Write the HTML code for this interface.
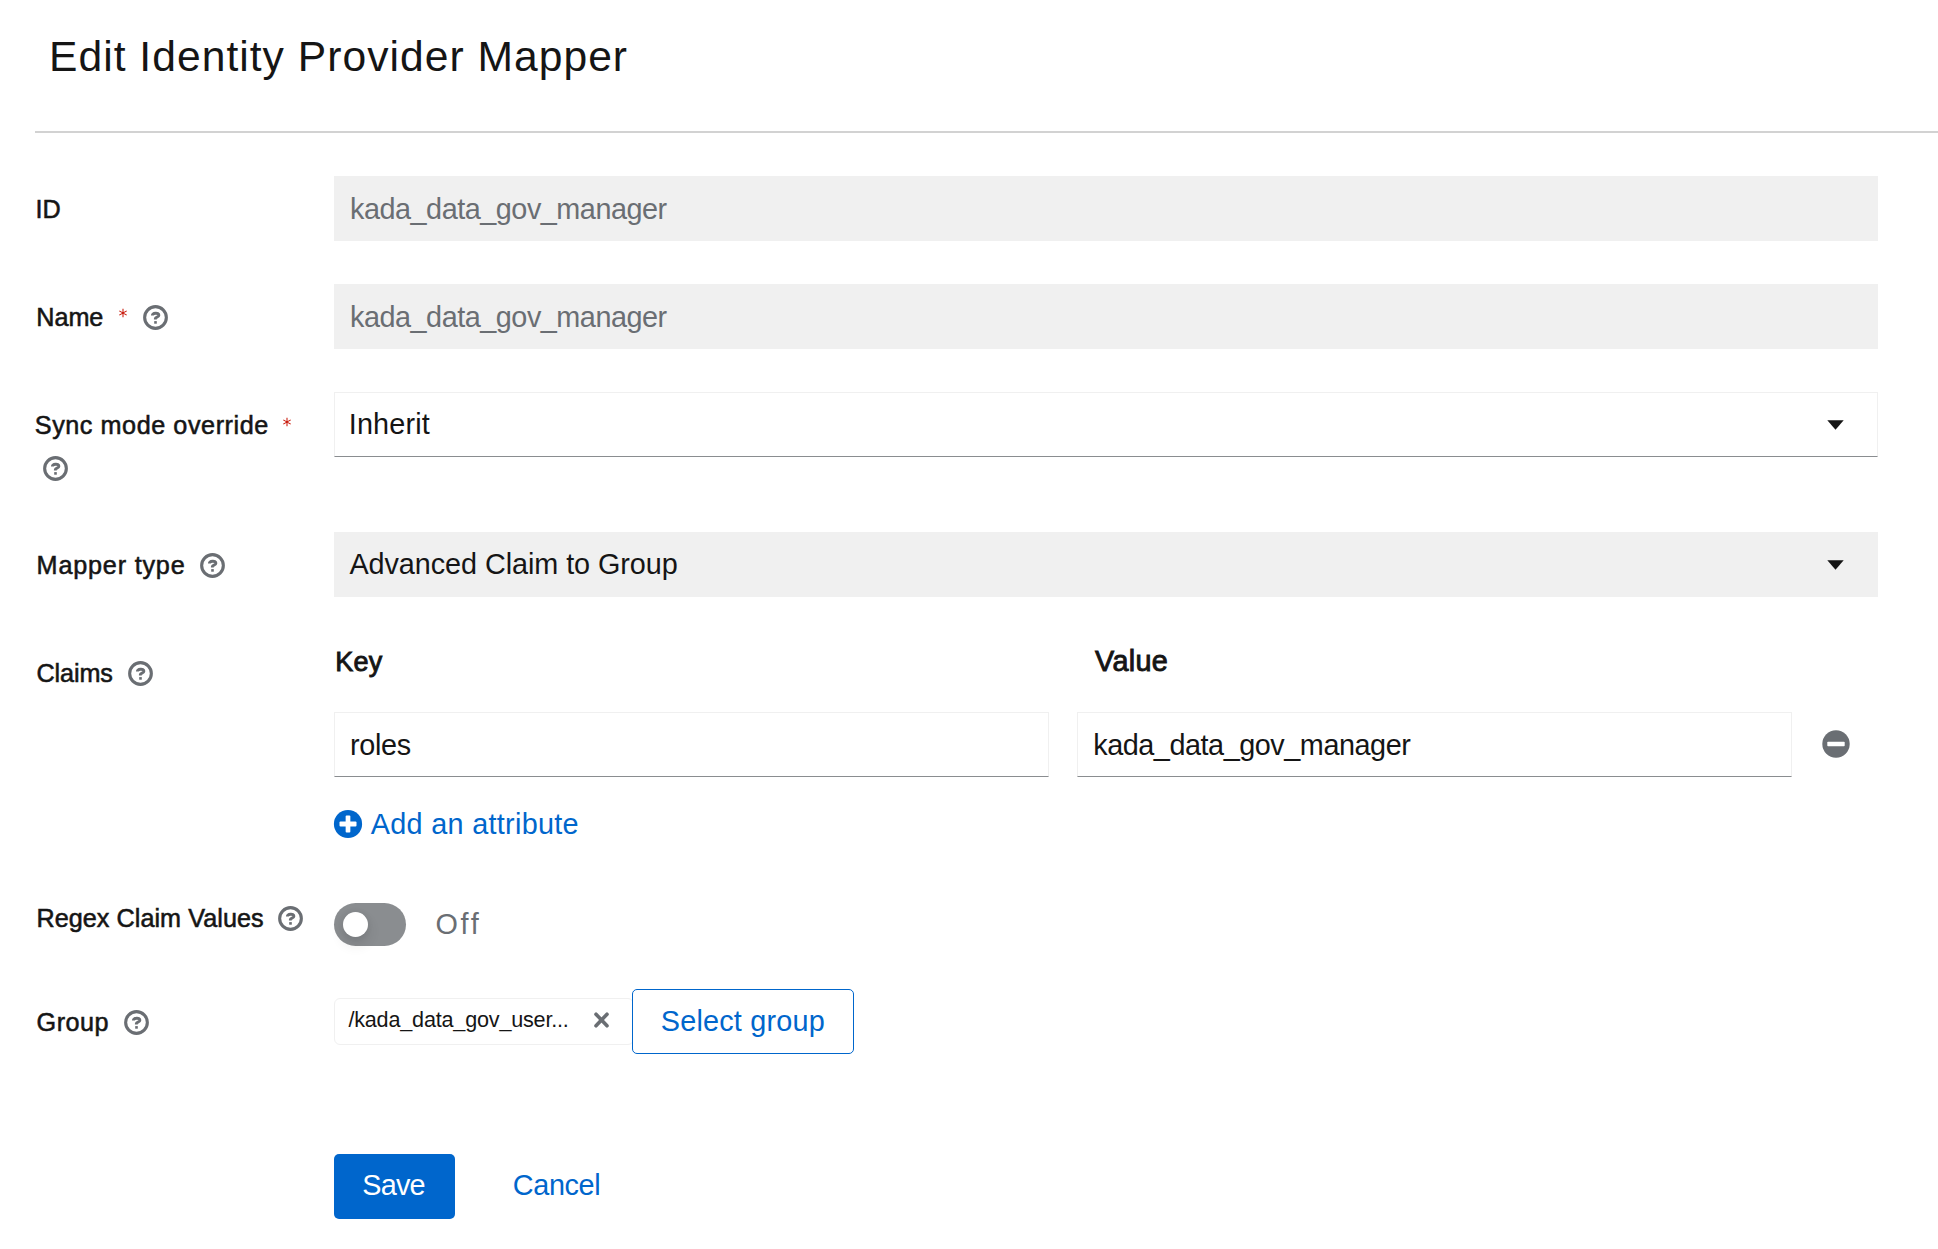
<!DOCTYPE html>
<html>
<head>
<meta charset="utf-8">
<title>Edit Identity Provider Mapper</title>
<style>
html,body{margin:0;padding:0;background:#fff;}
body{width:1938px;height:1249px;position:relative;overflow:hidden;font-family:"Liberation Sans",sans-serif;color:#151515;}
.a{position:absolute;}
.t{position:absolute;white-space:nowrap;line-height:1;}
.lbl{-webkit-text-stroke:0.55px #151515;}
.hdr{-webkit-text-stroke:0.9px #151515;}
.inp{position:absolute;box-sizing:border-box;}
.dis{background:#f0f0f0;}
.brd{background:#fff;border:1px solid #f0f0f0;border-bottom-color:#8a8d90;}
.gray{color:#6a6e73;}
.blue{color:#0066cc;}
.white{color:#fff;}
.ast{position:absolute;white-space:nowrap;line-height:1;font-size:22px;color:#c9190b;}
svg{position:absolute;overflow:visible;}
</style>
</head>
<body>

<div class="a" style="left:35px;top:131px;width:1903px;height:2px;background:#d2d2d2;"></div>
<div class="inp dis" style="left:334px;top:176px;width:1544px;height:65px;"></div>
<svg style="left:118.00px;top:307.90px" width="10" height="10" viewBox="-5 -5 10 10"><path d="M0 -4.3 V4.3 M-3.7 -2.1 L3.7 2.1 M-3.7 2.1 L3.7 -2.1" stroke="#c9190b" stroke-width="1.05" fill="none"/></svg>
<svg style="left:143.0px;top:304.8px" width="25" height="25" viewBox="-12.5 -12.5 25 25"><circle r="10.85" fill="none" stroke="#6a6e73" stroke-width="3.1"/><path d="M-3.1 -1.9 C-3.1 -4.7 3.4 -5.3 3.4 -2.3 C3.4 -0.2 -0.15 -0.7 -0.15 1.0 L-0.15 1.9" fill="none" stroke="#6a6e73" stroke-width="2.9"/><rect x="-1.3" y="3.6" width="2.6" height="2.6" fill="#6a6e73"/></svg>
<div class="inp dis" style="left:334px;top:284px;width:1544px;height:65px;"></div>
<svg style="left:282.40px;top:416.60px" width="10" height="10" viewBox="-5 -5 10 10"><path d="M0 -4.3 V4.3 M-3.7 -2.1 L3.7 2.1 M-3.7 2.1 L3.7 -2.1" stroke="#c9190b" stroke-width="1.05" fill="none"/></svg>
<svg style="left:42.7px;top:455.8px" width="25" height="25" viewBox="-12.5 -12.5 25 25"><circle r="10.85" fill="none" stroke="#6a6e73" stroke-width="3.1"/><path d="M-3.1 -1.9 C-3.1 -4.7 3.4 -5.3 3.4 -2.3 C3.4 -0.2 -0.15 -0.7 -0.15 1.0 L-0.15 1.9" fill="none" stroke="#6a6e73" stroke-width="2.9"/><rect x="-1.3" y="3.6" width="2.6" height="2.6" fill="#6a6e73"/></svg>
<div class="inp brd" style="left:334px;top:392px;width:1544px;height:65px;"></div>
<svg style="left:1827px;top:420px" width="17" height="10" viewBox="0 0 17 10"><path d="M0.3 0.2 L16.7 0.2 L8.5 9.8 Z" fill="#151515"/></svg>
<svg style="left:200.0px;top:553.0px" width="25" height="25" viewBox="-12.5 -12.5 25 25"><circle r="10.85" fill="none" stroke="#6a6e73" stroke-width="3.1"/><path d="M-3.1 -1.9 C-3.1 -4.7 3.4 -5.3 3.4 -2.3 C3.4 -0.2 -0.15 -0.7 -0.15 1.0 L-0.15 1.9" fill="none" stroke="#6a6e73" stroke-width="2.9"/><rect x="-1.3" y="3.6" width="2.6" height="2.6" fill="#6a6e73"/></svg>
<div class="inp dis" style="left:334px;top:532px;width:1544px;height:65px;"></div>
<svg style="left:1827px;top:560px" width="17" height="10" viewBox="0 0 17 10"><path d="M0.3 0.2 L16.7 0.2 L8.5 9.8 Z" fill="#151515"/></svg>
<svg style="left:127.9px;top:661.0px" width="25" height="25" viewBox="-12.5 -12.5 25 25"><circle r="10.85" fill="none" stroke="#6a6e73" stroke-width="3.1"/><path d="M-3.1 -1.9 C-3.1 -4.7 3.4 -5.3 3.4 -2.3 C3.4 -0.2 -0.15 -0.7 -0.15 1.0 L-0.15 1.9" fill="none" stroke="#6a6e73" stroke-width="2.9"/><rect x="-1.3" y="3.6" width="2.6" height="2.6" fill="#6a6e73"/></svg>
<div class="inp brd" style="left:334px;top:712px;width:715px;height:65px;"></div>
<div class="inp brd" style="left:1077px;top:712px;width:715px;height:65px;"></div>
<svg style="left:1821.5px;top:730px" width="28" height="28" viewBox="-14 -14 28 28"><circle r="13.7" fill="#6a6e73"/><rect x="-8.7" y="-2.3" width="17.4" height="4.6" rx="0.8" fill="#fff"/></svg>
<svg style="left:334.1px;top:809.7px" width="28" height="28" viewBox="-14 -14 28 28"><circle r="14.1" fill="#0066cc"/><rect x="-8.5" y="-2.45" width="17" height="4.9" rx="1" fill="#fff"/><rect x="-2.35" y="-8.4" width="4.7" height="16.9" rx="1" fill="#fff"/></svg>
<svg style="left:278.0px;top:905.8px" width="25" height="25" viewBox="-12.5 -12.5 25 25"><circle r="10.85" fill="none" stroke="#6a6e73" stroke-width="3.1"/><path d="M-3.1 -1.9 C-3.1 -4.7 3.4 -5.3 3.4 -2.3 C3.4 -0.2 -0.15 -0.7 -0.15 1.0 L-0.15 1.9" fill="none" stroke="#6a6e73" stroke-width="2.9"/><rect x="-1.3" y="3.6" width="2.6" height="2.6" fill="#6a6e73"/></svg>
<div class="a" style="left:334px;top:903px;width:72px;height:43px;border-radius:22px;background:#8a8d90;"></div>
<div class="a" style="left:343px;top:912px;width:25px;height:25px;border-radius:50%;background:#fff;box-shadow:0 7px 14px rgba(3,3,3,0.12),0 0 7px rgba(3,3,3,0.06);"></div>
<svg style="left:124.0px;top:1009.5px" width="25" height="25" viewBox="-12.5 -12.5 25 25"><circle r="10.85" fill="none" stroke="#6a6e73" stroke-width="3.1"/><path d="M-3.1 -1.9 C-3.1 -4.7 3.4 -5.3 3.4 -2.3 C3.4 -0.2 -0.15 -0.7 -0.15 1.0 L-0.15 1.9" fill="none" stroke="#6a6e73" stroke-width="2.9"/><rect x="-1.3" y="3.6" width="2.6" height="2.6" fill="#6a6e73"/></svg>
<div class="inp" style="left:334px;top:998px;width:300px;height:47px;border:1px solid #f0f0f0;border-radius:6px;"></div>
<svg style="left:594px;top:1012px" width="15" height="16" viewBox="0 0 15 16"><path d="M2 2.2 L13 13.8 M13 2.2 L2 13.8" stroke="#6a6e73" stroke-width="3.6" stroke-linecap="round"/></svg>
<div class="inp" style="left:632px;top:989px;width:222px;height:65px;border:1.8px solid #0066cc;border-radius:5px;background:#fff;"></div>
<div class="inp" style="left:334px;top:1154px;width:121px;height:65px;border-radius:5px;background:#0066cc;"></div>
<div class="t " id="title" style="left:49.00px;top:34.81px;font-size:42.6px;letter-spacing:1.029px;">Edit Identity Provider Mapper</div>
<div class="t lbl" id="l_id" style="left:35.40px;top:197.00px;font-size:25.2px;">ID</div>
<div class="t gray" id="v_id" style="left:350.00px;top:194.80px;font-size:28.8px;letter-spacing:-0.473px;">kada_data_gov_manager</div>
<div class="t lbl" id="l_name" style="left:36.20px;top:304.90px;font-size:25.2px;">Name</div>
<div class="t gray" id="v_name" style="left:350.00px;top:302.80px;font-size:28.8px;letter-spacing:-0.473px;">kada_data_gov_manager</div>
<div class="t lbl" id="l_sync" style="left:34.80px;top:413.22px;font-size:25.2px;letter-spacing:0.556px;">Sync mode override</div>
<div class="t " id="v_sync" style="left:348.80px;top:409.90px;font-size:28.8px;letter-spacing:0.150px;">Inherit</div>
<div class="t lbl" id="l_mapper" style="left:36.60px;top:553.20px;font-size:25.2px;letter-spacing:0.810px;">Mapper type</div>
<div class="t " id="v_mapper" style="left:349.40px;top:549.90px;font-size:28.8px;letter-spacing:-0.061px;">Advanced Claim to Group</div>
<div class="t lbl" id="l_claims" style="left:36.40px;top:660.60px;font-size:25.2px;letter-spacing:-0.090px;">Claims</div>
<div class="t hdr" id="h_key" style="left:335.20px;top:649.30px;font-size:27.0px;letter-spacing:0.300px;">Key</div>
<div class="t hdr" id="h_value" style="left:1095.00px;top:647.00px;font-size:28.8px;letter-spacing:0.337px;">Value</div>
<div class="t " id="v_roles" style="left:350.00px;top:730.80px;font-size:28.8px;letter-spacing:-0.337px;">roles</div>
<div class="t " id="v_value" style="left:1093.20px;top:730.80px;font-size:28.8px;letter-spacing:-0.450px;">kada_data_gov_manager</div>
<div class="t blue" id="add" style="left:370.80px;top:809.80px;font-size:28.8px;letter-spacing:0.300px;">Add an attribute</div>
<div class="t lbl" id="l_regex" style="left:36.40px;top:905.82px;font-size:25.2px;letter-spacing:0.053px;">Regex Claim Values</div>
<div class="t gray" id="off" style="left:435.40px;top:909.50px;font-size:28.8px;letter-spacing:2.700px;">Off</div>
<div class="t lbl" id="l_group" style="left:36.60px;top:1009.82px;font-size:25.2px;letter-spacing:0.450px;">Group</div>
<div class="t " id="chip" style="left:348.40px;top:1009.22px;font-size:21.6px;letter-spacing:-0.193px;">/kada_data_gov_user...</div>
<div class="t blue" id="selgrp" style="left:660.80px;top:1006.90px;font-size:28.8px;letter-spacing:0.205px;">Select group</div>
<div class="t white" id="save" style="left:362.20px;top:1171.40px;font-size:28.8px;letter-spacing:-0.750px;">Save</div>
<div class="t blue" id="cancel" style="left:512.80px;top:1171.40px;font-size:28.8px;letter-spacing:-0.360px;">Cancel</div>
</body>
</html>
